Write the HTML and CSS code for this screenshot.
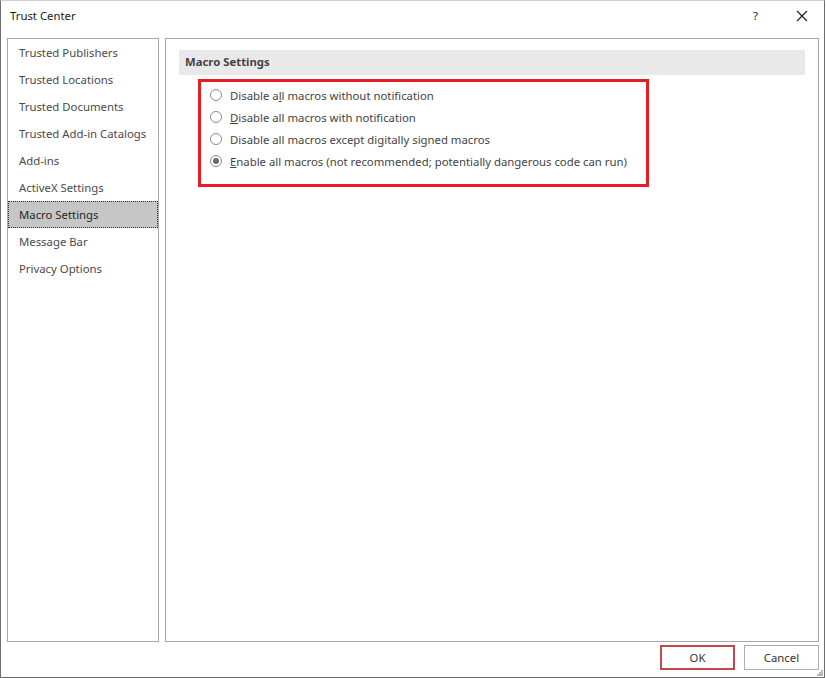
FILE: index.html
```html
<!DOCTYPE html>
<html lang="en">
  <head>
    <meta charset="UTF-8" />
    <title>Trust Center</title>
    <link rel="stylesheet" href="styles.css">
  </head>
  <body>
    <div class="window">
      <div class="titlebar">
        <span class="title">Trust Center</span>
        <span class="help">?</span>
        <span class="close">
          <svg width="12" height="12" viewBox="0 0 12 12">
            <path d="M1 1 L11 11 M11 1 L1 11" stroke="#1a1a1a" stroke-width="1.1" fill="none" />
          </svg>
        </span>
      </div>

      <div class="content">
        <ul class="sidebar">
          <li>Trusted Publishers</li>
          <li>Trusted Locations</li>
          <li>Trusted Documents</li>
          <li>Trusted Add-in Catalogs</li>
          <li>Add-ins</li>
          <li>ActiveX Settings</li>
          <li class="active"><span>Macro Settings</span></li>
          <li>Message Bar</li>
          <li>Privacy Options</li>
        </ul>

        <div class="panel">
          <div class="section-title">Macro Settings</div>
          <div class="options">
            <label class="option"><span class="radio"></span>Disable a<u>l</u>l macros without notification</label>
            <label class="option"><span class="radio"></span><u>D</u>isable all macros with notification</label>
            <label class="option"><span class="radio"></span>Disable all macros except digitally signed macros</label>
            <label class="option"><span class="radio checked"></span><u>E</u>nable all macros (not recommended; potentially dangerous code can run)</label>
          </div>
        </div>
      </div>

      <div class="footer">
        <button class="btn default">OK</button>
        <button class="btn">Cancel</button>
      </div>

      <svg class="grip" width="6" height="6" viewBox="0 0 6 6">
        <rect x="4" y="0" width="2" height="2" fill="#b8b8b8" />
        <rect x="2" y="2" width="2" height="2" fill="#b8b8b8" />
        <rect x="4" y="2" width="2" height="2" fill="#b8b8b8" />
        <rect x="0" y="4" width="2" height="2" fill="#b8b8b8" />
        <rect x="2" y="4" width="2" height="2" fill="#b8b8b8" />
        <rect x="4" y="4" width="2" height="2" fill="#b8b8b8" />
      </svg>
    </div>
  </body>
</html>
```

FILE: styles.css
```css
body {
  font-family: "Segoe UI", "Noto Sans", sans-serif;
  font-size: 11.35px;
  margin: 0;
  padding: 0;
  background: #ffffff;
}

.window {
  position: relative;
  width: 825px;
  height: 678px;
  box-sizing: border-box;
  border: 1px solid #6e6e6e;
  border-top-color: #d0d0d0;
  background: #ffffff;
  color: #444444;
}

.titlebar {
  height: 37px;
  display: flex;
  align-items: flex-start;
  padding-top: 6px;
  box-sizing: border-box;
}

.title {
  margin-left: 9px;
  color: #1a1a1a;
  line-height: 18px;
}

.help {
  margin-left: auto;
  color: #1a1a1a;
  line-height: 18px;
}

.close {
  margin-left: 38px;
  margin-right: 16px;
  height: 18px;
  display: flex;
  align-items: center;
}

.content {
  display: flex;
  gap: 6px;
  padding: 0 5px 0 6px;
  height: 604px;
}

.sidebar {
  list-style-type: none;
  margin: 0;
  padding: 0;
  width: 152px;
  box-sizing: border-box;
  border: 1px solid #a9a9a9;
}

.sidebar li {
  height: 27px;
  line-height: 28px;
  padding-left: 11px;
  color: #4a4a4a;
  white-space: nowrap;
}

.sidebar li.active {
  background-color: #c6c6c6;
  color: #262626;
  padding: 0;
}

.sidebar li.active span {
  display: block;
  height: 27px;
  box-sizing: border-box;
  border: 1px dotted #303030;
  padding-left: 10px;
  line-height: 26px;
}

.panel {
  flex: 1;
  box-sizing: border-box;
  border: 1px solid #a9a9a9;
  padding: 11px 13px 0 13px;
}

.section-title {
  height: 25px;
  line-height: 24px;
  background-color: #e9e9e9;
  padding-left: 6px;
  font-weight: bold;
  color: #444444;
}

.options {
  width: 451px;
  height: 108px;
  box-sizing: border-box;
  margin: 4px 0 0 19px;
  border: 3px solid #e81c24;
  padding: 2px 0 0 9px;
}

.option {
  display: flex;
  align-items: center;
  height: 22px;
  white-space: nowrap;
  color: #444444;
}

.radio {
  width: 12px;
  height: 12px;
  box-sizing: border-box;
  border: 1px solid #8a8a8a;
  border-radius: 50%;
  margin-right: 8px;
  flex-shrink: 0;
  display: flex;
  align-items: center;
  justify-content: center;
}

.radio.checked::after {
  content: "";
  width: 6px;
  height: 6px;
  border-radius: 50%;
  background-color: #6a6a6a;
}

.footer {
  display: flex;
  justify-content: flex-end;
  gap: 9px;
  padding: 3px 5px 0 0;
}

.btn {
  width: 75px;
  height: 25px;
  box-sizing: border-box;
  background-color: #ffffff;
  border: 1px solid #adadad;
  font-family: inherit;
  font-size: 11.35px;
  color: #333333;
  padding: 0;
}

.btn.default {
  border: 2px solid #c4474c;
}

.grip {
  position: absolute;
  right: 1px;
  bottom: 1px;
}
```
